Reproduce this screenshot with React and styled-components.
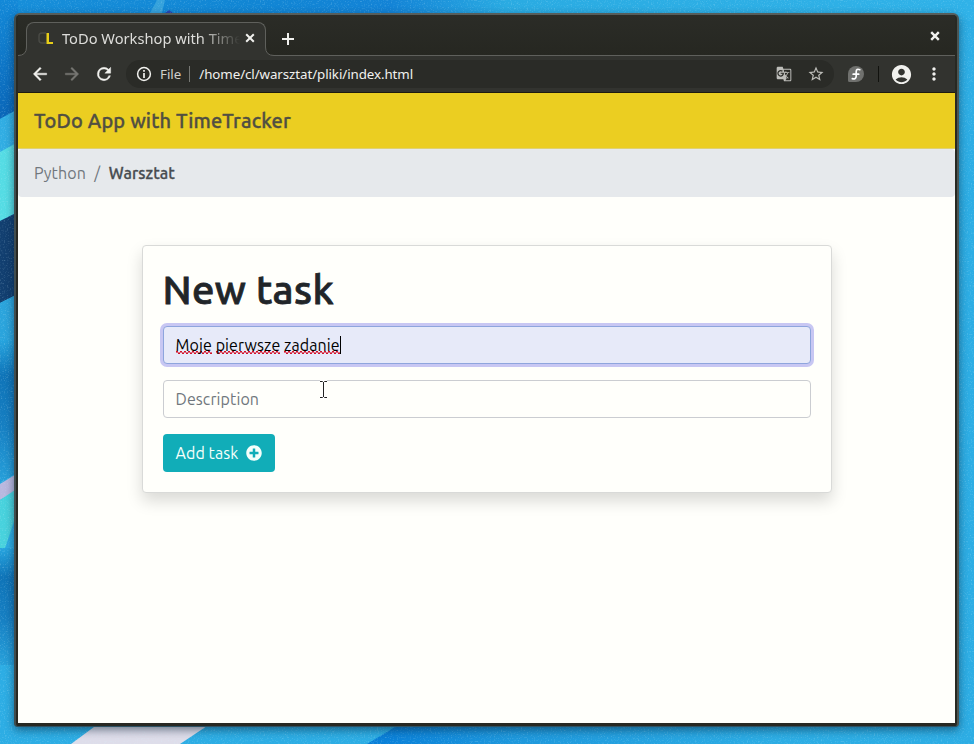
import React from 'react';
import styled, { createGlobalStyle, css } from 'styled-components';
import { MdGTranslate, MdStarBorder, MdAccountCircle, MdMoreVert } from 'react-icons/md';
import { FaPlusCircle } from 'react-icons/fa';

const Global = createGlobalStyle`
  * { box-sizing: border-box; }
  html, body, #root { height: 100%; margin: 0; }
  body { overflow: hidden; font-family: Ubuntu, "Noto Sans", sans-serif; color: #212529; }
`;

const Desktop = styled.main`
  position: relative;
  width: 974px;
  height: 744px;
  padding: 13px 15px 17px 14px;
  background: #2aabe2;
  isolation: isolate;
`;

const Wallpaper = styled.svg`
  position: absolute;
  inset: 0;
  z-index: -1;
`;

const Window = styled.section`
  display: flex;
  flex-direction: column;
  height: 714px;
  padding: 0 2px 3px;
  border: 2px solid;
  border-bottom-width: 1px;
  border-color: #565d5b #4a5655 #2d5162 #414d4e;
  border-radius: 6px 6px 4px 4px;
  background: #272822;
  box-shadow: 0 3px 9px rgba(0, 25, 45, 0.5);
`;

const TabStrip = styled.header`
  display: flex;
  align-items: flex-end;
  flex: 0 0 41px;
  background: linear-gradient(#2b2c27, #262721);
  box-shadow: inset 0 -1px #5f605c;
`;

const Tab = styled.div`
  display: flex;
  align-items: center;
  position: relative;
  width: 240px;
  height: 34px;
  margin-left: 8px;
  padding: 0 9px 3px 11px;
  border: 1px solid #5f605c;
  border-bottom: 0;
  border-radius: 8px 8px 0 0;
  background: #32332f;
`;

const TabFoot = styled.svg`
  position: absolute;
  bottom: 0;
  ${p => (p.$side === 'left'
    ? css`left: -9px;`
    : css`right: -9px; transform: scaleX(-1);`)}
`;

const Favicon = styled.svg`
  flex: none;
  margin-right: 8px;
`;

const TabTitle = styled.span`
  flex: none;
  width: 183px;
  white-space: nowrap;
  font: 14.67px/22px "Noto Sans", sans-serif;
  color: #dededb;
  mask-image: linear-gradient(90deg, #000 138px, transparent 178px);
`;

const Glyph = styled.svg`
  display: block;
  flex: none;
  color: ${p => p.$color || '#f1f1ee'};
  margin-left: ${p => p.$left || 0}px;
`;

const NewTab = styled.div`
  margin: 0 0 11px 16px;
`;

const CloseWindow = styled.div`
  margin: 0 15px 15px auto;
`;

const Toolbar = styled.nav`
  display: flex;
  align-items: center;
  flex: 0 0 37px;
  border-bottom: 1px solid #1e1b10;
  background: #32332f;
  color: #f1f1ee;
`;

const AddressBar = styled.div`
  display: flex;
  align-items: center;
  width: 708px;
  height: 28px;
  margin-left: 12px;
  padding-right: 9px;
  border-radius: 14px;
  background: #2a2b27;
  font: 13.33px/20px "Noto Sans", sans-serif;
  white-space: nowrap;
`;

const Scheme = styled.span`
  margin-left: 8px;
  padding-right: 8px;
  border-right: 1px solid #777874;
  line-height: 16px;
  color: #d0d0cc;
`;

const Url = styled.span`
  margin: 0 auto 0 9px;
  letter-spacing: -0.08px;
`;

const PageActions = styled.span`
  display: flex;
  align-items: center;
  gap: 15px;
  color: #bdbdb9;
`;

const Divider = styled.span`
  width: 1px;
  height: 16px;
  margin-left: 14px;
  background: #11120e;
`;

const ProfileMenu = styled.span`
  display: flex;
  align-items: center;
  gap: 11px;
  margin-left: 11px;
`;

const Page = styled.div`
  flex: 1;
  background: #fffffb;
`;

const Navbar = styled.header`
  height: 56px;
  padding: 13px 16px;
  border-bottom: 1px solid #dfd172;
  background: #ebce21;
  color: #514f42;
  font-size: 20px;
  line-height: 30px;
  font-weight: 500;
  letter-spacing: 0.15px;
  -webkit-text-stroke: 0.35px;
`;

const Breadcrumb = styled.nav`
  display: flex;
  align-items: center;
  height: 48px;
  padding: 0 16px;
  border-radius: 4px;
  background: #e6e9ec;
  font-size: 16px;
  color: #70777d;
`;

const Crumb = styled.span`
  letter-spacing: 0.08px;
  ${p => p.$active && css`
    letter-spacing: 0.1px;
    -webkit-text-stroke: 0.3px;
    font-weight: 500;
    color: #484d51;
  `}
`;

const Slash = styled.span`
  margin: 0 8.500px;
`;

const Card = styled.section`
  width: 690px;
  height: 248px;
  margin: 48px auto 0;
  padding: 20px;
  border: 1px solid #d9dad8;
  border-radius: 4px;
  background: #fffffb;
  box-shadow: 0 8px 16px rgba(0, 0, 0, 0.15);
`;

const Heading = styled.h1`
  height: 60px;
  margin: 0;
  font-size: 40px;
  line-height: 48px;
  font-weight: 500;
  letter-spacing: 0.38px;
  -webkit-text-stroke: 0.8px;
`;

const Field = styled.div`
  display: flex;
  align-items: center;
  position: relative;
  height: 38px;
  margin-bottom: 16px;
  padding: 0 12px;
  border: 1px solid ${p => (p.$focused ? '#8ea5dd' : '#cbcdd1')};
  border-radius: 4px;
  background: ${p => (p.$focused ? '#e7eaf9' : '#fffffb')};
  box-shadow: ${p => (p.$focused ? '0 0 0 3px #c8c7f3' : 'none')};
  color: ${p => (p.$focused ? '#000' : '#70777d')};
  font-size: 16px;
  letter-spacing: 0.1px;
`;

const Words = styled.span`
  white-space: pre;
`;

const Misspelled = styled.span`
  background-image:
    linear-gradient(90deg, #d3132b 50%, transparent 50%),
    linear-gradient(#d3132b99, #d3132b99),
    linear-gradient(90deg, transparent 50%, #d3132b 50%);
  background-size: 4px 1px;
  background-position: 0 calc(100% - 2px), 0 calc(100% - 1px), 0 100%;
  background-repeat: repeat-x;
`;

const Caret = styled.i`
  width: 1px;
  height: 18px;
  background: #000;
`;

const Pointer = styled.svg`
  position: absolute;
  left: 155px;
  top: -1px;
`;

const AddButton = styled.button`
  display: flex;
  align-items: center;
  justify-content: space-between;
  width: 112px;
  height: 38px;
  padding: 0 13px;
  border: 0;
  border-radius: 4px;
  background: #11adb8;
  color: #f5fffb;
  font: 16px/24px Ubuntu, "Noto Sans", sans-serif;
  letter-spacing: 0.08px;
  white-space: nowrap;
`;

function Background() {
  return (
    <Wallpaper width="974" height="744" aria-hidden="true">
      <defs>
        <linearGradient id="sky" x2="1">
          <stop offset="0" stopColor="#178fda" />
          <stop offset=".25" stopColor="#1186d4" />
          <stop offset=".4" stopColor="#1383d6" />
          <stop offset=".52" stopColor="#2aabe2" />
          <stop offset="1" stopColor="#30b2e8" />
        </linearGradient>
        <linearGradient id="floor" gradientUnits="userSpaceOnUse" x1="370" x2="780">
          <stop offset="0" stopColor="#087ed8" />
          <stop offset=".35" stopColor="#1e98dc" />
          <stop offset="1" stopColor="#2dade4" />
        </linearGradient>
        <linearGradient id="corner" x2="0" y2="1">
          <stop offset="0" stopColor="#1389d8" />
          <stop offset="1" stopColor="#0a66b8" />
        </linearGradient>
        <linearGradient id="edge" x2="0" y2="1">
          <stop offset="0" stopColor="#27a5df" />
          <stop offset=".25" stopColor="#0f74b8" />
          <stop offset=".6" stopColor="#167fc2" />
          <stop offset="1" stopColor="#27a0da" />
        </linearGradient>
        <filter id="grain" x="0" y="0" width="1" height="1">
          <feTurbulence type="fractalNoise" baseFrequency=".7" numOctaves="2" seed="4" />
          <feColorMatrix values="0 0 0 0 .65  0 0 0 0 .9  0 0 0 0 1  3 0 0 0 -1.6" />
        </filter>
      </defs>
      <rect width="974" height="744" fill="#2dade4" />
      <rect width="974" height="20" fill="url(#sky)" />
      <path d="M157 0h8l-3 13h-12z" fill="#35a2dc" />
      <path d="M165 13l4-3 4 3z" fill="#2948b4" />
      <path d="M0 0H18V110L0 119z" fill="url(#corner)" />
      <path d="M0 119L18 109V142L0 152z" fill="#31ade3" />
      <path d="M0 152L18 142V212L0 221z" fill="#55dce4" />
      <path d="M0 221L18 212V294L0 303z" fill="#123f70" />
      <path d="M0 303L18 294V350H0z" fill="#2ba4dc" />
      <path d="M0 340H18V472L0 483z" fill="url(#edge)" />
      <path d="M0 484L18 473V490L0 500z" fill="#bab8df" />
      <path d="M0 500L18 488V510L5 548H0z" fill="#48d2dd" />
      <path d="M0 548H18V665H0z" fill="url(#edge)" />
      <path d="M98 724H210L180 744H71z" fill="#deddea" />
      <path d="M395 727V724H974V744H367z" fill="url(#floor)" />
      <rect width="974" height="744" filter="url(#grain)" opacity=".22" />
    </Wallpaper>
  );
}

function Cross({ size = 10, width = 2 }) {
  return (
    <Glyph width={size} height={size} viewBox="0 0 10 10">
      <path d="M1.2 1.2l7.6 7.6m0-7.6l-7.6 7.6" stroke="currentColor" strokeWidth={width} />
    </Glyph>
  );
}

function Foot({ side }) {
  return (
    <TabFoot $side={side} width="9" height="9" viewBox="0 0 9 9">
      <path d="M9 0h-.5Q8.500 8.500 0 8.500V9h9z" fill="#32332f" />
      <path d="M8.500 0Q8.500 8.500 0 8.500" fill="none" stroke="#5f605c" />
    </TabFoot>
  );
}

function Browser() {
  return (
    <>
      <TabStrip>
        <Tab>
          <Foot side="left" />
          <Favicon width="16" height="16" viewBox="0 0 16 16">
            <path d="M8 3H4Q1 3 1 6v4q0 3 3 3h4" fill="none" stroke="#484944" strokeWidth="1.5" />
            <path d="M8.500 3h2.500v9h4v2H8.500z" fill="#e7ce19" />
          </Favicon>
          <TabTitle>ToDo Workshop with Time</TabTitle>
          <Cross />
          <Foot side="right" />
        </Tab>
        <NewTab>
          <Glyph width="12" height="12"><path d="M6 0v12M0 6h12" stroke="currentColor" strokeWidth="2" /></Glyph>
        </NewTab>
        <CloseWindow><Cross width={2.4} /></CloseWindow>
      </TabStrip>
      <Toolbar>
        <Glyph $left={12} width="20" height="20" viewBox="0 0 24 24">
          <path d="M20 11H7.830l5.590-5.590L12 4l-8 8 8 8 1.410-1.410L7.830 13H20z" fill="currentColor" stroke="currentColor" strokeWidth=".5" />
        </Glyph>
        <Glyph $left={12} $color="#777773" width="20" height="20" viewBox="0 0 24 24">
          <path d="m12 4-1.410 1.410L16.170 11H4v2h12.170l-5.580 5.590L12 20l8-8z" fill="currentColor" stroke="currentColor" strokeWidth=".5" />
        </Glyph>
        <Glyph $left={12} width="20" height="20" viewBox="0 0 24 24">
          <path d="M17.650 6.350A7.960 7.960 0 0 0 12 4a8 8 0 1 0 7.730 10h-2.080A6 6 0 1 1 12 6c1.660 0 3.140.690 4.220 1.780L13 11h7V4z" fill="currentColor" stroke="currentColor" strokeWidth=".5" />
        </Glyph>
        <AddressBar>
          <Glyph $left={10} width="16" height="16">
            <circle cx="8" cy="8" r="6.400" fill="none" stroke="currentColor" strokeWidth="1.500" />
            <path d="M8 4v1.700M8 7v5" stroke="currentColor" strokeWidth="1.700" />
          </Glyph>
          <Scheme>File</Scheme>
          <Url>/home/cl/warsztat/pliki/index.html</Url>
          <PageActions>
            <MdGTranslate size={16} />
            <MdStarBorder size={18} />
          </PageActions>
        </AddressBar>
        <Glyph $left={14} width="16" height="16" viewBox="0 0 16 16">
          <path d="M8 0a8 8 0 1 1 0 16H1.500Q0 16 0 14.500V8a8 8 0 0 1 8-8z" fill="#70716e" />
          <path d="M11.800 3.700Q8.300 2.200 8.200 5.700v4.500Q8 13.500 4.300 12.700M5.200 8.200h5.500" fill="none" stroke="#fff" strokeWidth="1.700" strokeLinecap="round" />
        </Glyph>
        <Divider />
        <ProfileMenu>
          <MdAccountCircle size={23} />
          <MdMoreVert size={20} />
        </ProfileMenu>
      </Toolbar>
    </>
  );
}

export default function App() {
  return (
    <>
      <Global />
      <Desktop>
        <Background />
        <Window>
          <Browser />
          <Page>
            <Navbar>ToDo App with TimeTracker</Navbar>
            <Breadcrumb><Crumb>Python</Crumb><Slash>/</Slash><Crumb $active>Warsztat</Crumb></Breadcrumb>
            <Card>
              <Heading>New task</Heading>
              <Field $focused>
                <Words><Misspelled>Moje</Misspelled> <Misspelled>pierwsze</Misspelled> <Misspelled>zadanie</Misspelled></Words>
                <Caret />
              </Field>
              <Field>
                Description
                <Pointer width="9" height="19" viewBox="0 0 9 19">
                  <path d="M1 1.500h2.500l1 1 1-1H8M4.500 2v15M1 17.500h2.500l1-1 1 1H8" fill="none" stroke="#fff" strokeWidth="3" />
                  <path d="M1 1.500h2.500l1 1 1-1H8M4.500 2v15M1 17.500h2.500l1-1 1 1H8" fill="none" stroke="#222" />
                </Pointer>
              </Field>
              <AddButton>Add task<FaPlusCircle size={16} /></AddButton>
            </Card>
          </Page>
        </Window>
      </Desktop>
    </>
  );
}
